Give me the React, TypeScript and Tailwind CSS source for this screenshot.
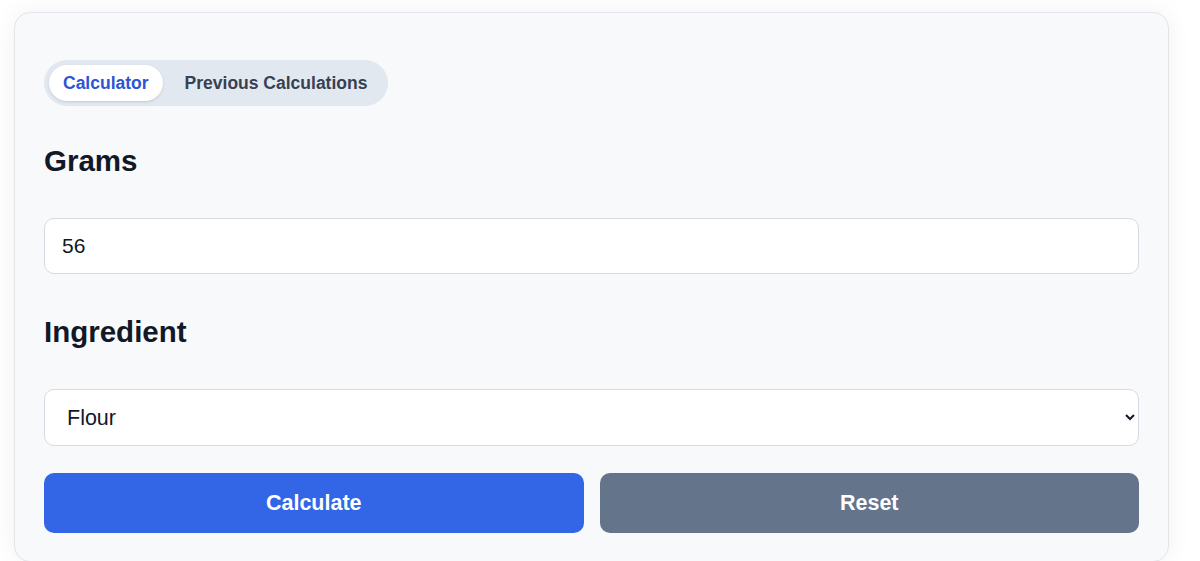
import { useState } from "react";

const App = () => {
  const [tab, setTab] = useState<'calc' | 'history'>('calc');
  const [grams, setGrams] = useState('56');
  const [ingredient, setIngredient] = useState('Flour');

  return (
    <div className="min-h-screen bg-white pt-3 px-[14px] font-['Liberation_Sans',Arial,sans-serif]">
      <div className="w-[1155px] rounded-2xl border border-[#e2e5ea] bg-[#f8f9fb] px-[29px] pt-[47px] pb-7 shadow-[0_0_24px_rgba(15,23,42,0.06)]">
        <div className="inline-flex items-center gap-[2px] rounded-full bg-[#e2e8f0] p-[5px]">
          <button
            onClick={() => setTab('calc')}
            className={`h-9 rounded-full px-[14px] text-[17.5px] font-bold ${tab === 'calc' ? 'bg-white text-[#2b55d6] shadow-sm' : 'text-[#374151]'}`}
          >
            Calculator
          </button>
          <button
            onClick={() => setTab('history')}
            className={`h-9 rounded-full pl-[20px] pr-[16px] text-[17.5px] font-bold ${tab === 'history' ? 'bg-white text-[#2b55d6] shadow-sm' : 'text-[#374151]'}`}
          >
            Previous Calculations
          </button>
        </div>

        <h2 className="mt-[38px] text-[29.5px] font-bold leading-[33px] text-[#111827]">Grams</h2>
        <input
          value={grams}
          onChange={e => setGrams(e.target.value)}
          className="mt-[41px] block h-14 w-full rounded-[10px] border border-[#d5dbe5] bg-white px-[17px] text-[21px] text-[#111827] outline-none"
        />

        <h2 className="mt-[41px] text-[29.5px] font-bold leading-[33px] text-[#111827]">Ingredient</h2>
        <select
          value={ingredient}
          onChange={e => setIngredient(e.target.value)}
          className="mt-[41px] block h-[57px] w-full rounded-[10px] border border-[#d5dbe5] bg-white px-[18px] text-[21.5px] text-[#111827] outline-none"
        >
          <option>Flour</option>
          <option>Sugar</option>
          <option>Butter</option>
        </select>

        <div className="mt-[27px] grid grid-cols-2 gap-4">
          <button className="h-[60px] rounded-[10px] bg-[#3366e6] text-[21.5px] font-bold text-white">Calculate</button>
          <button className="h-[60px] rounded-[10px] bg-[#64748b] text-[21.5px] font-bold text-white">Reset</button>
        </div>
      </div>
    </div>
  );
};

export default App;
